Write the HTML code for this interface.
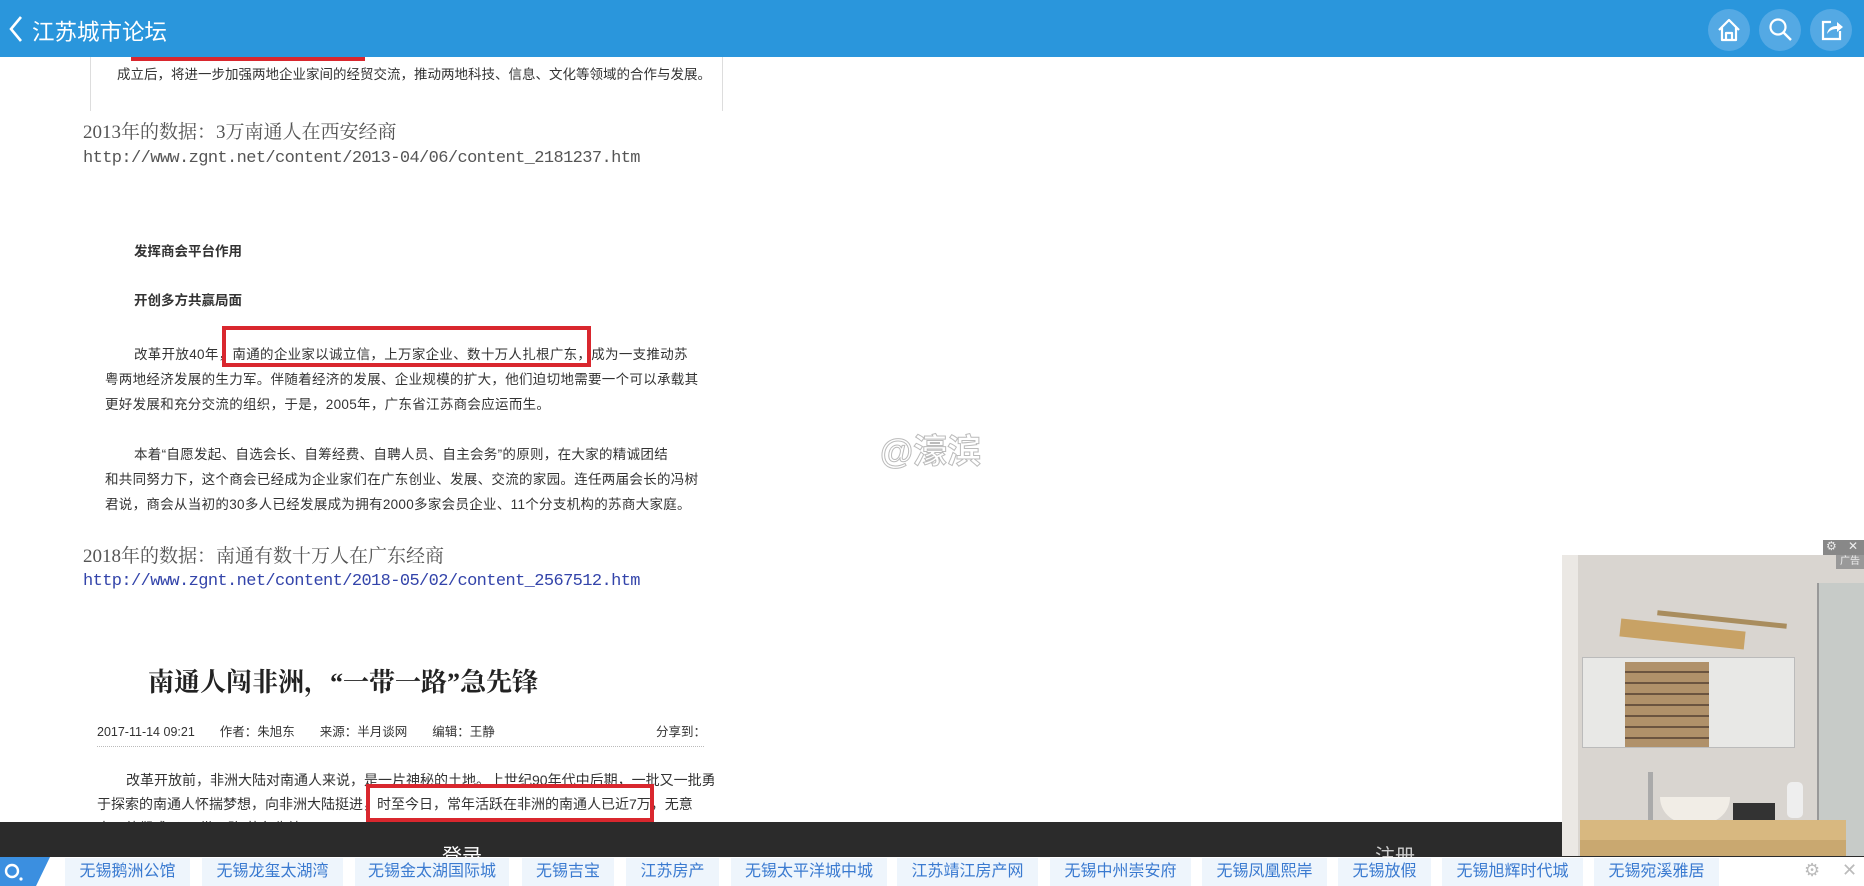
<!DOCTYPE html>
<html><head><meta charset="utf-8"><style>
*{margin:0;padding:0;box-sizing:border-box}
body{width:1864px;height:886px;overflow:hidden;background:#fff;position:relative;font-family:"Liberation Sans","Noto Sans CJK SC",sans-serif}
.a{position:absolute;white-space:nowrap}
.hdr{left:0;top:0;width:1864px;height:57px;background:#2a96dc}
.ic{width:42px;height:42px;border-radius:50%;background:#54a9e4;top:9px}
.s{font-family:"Liberation Serif","Noto Serif CJK SC",serif;color:#555;font-size:19px}
.m{font-family:"Liberation Mono","Noto Sans CJK SC",monospace;font-size:17px;color:#555;letter-spacing:-0.6px}
.p{font-size:14px;color:#333}
.tag{top:858px;height:28px;background:#eef5fc;color:#3a7ad0;font-size:16px;line-height:28px;text-align:center}
</style></head><body>
<div class="a hdr"></div>
<svg class="a" style="left:8px;top:15px" width="16" height="28"><path d="M13 2 L3 14 L13 26" stroke="#fff" stroke-width="2.6" fill="none"/></svg>
<div class="a" style="left:32px;top:15px;color:#fff;font-size:22.5px">江苏城市论坛</div>
<div class="a ic" style="left:1708px"></div>
<div class="a ic" style="left:1759px"></div>
<div class="a ic" style="left:1810px"></div>
<svg class="a" style="left:1716px;top:17px" width="26" height="26"><path d="M3 13 L13 3 L23 13 M6 10 V23 H20 V10 M10 23 V16 H16 V23" stroke="#fff" stroke-width="2.2" fill="none" stroke-linejoin="round"/></svg>
<svg class="a" style="left:1768px;top:17px" width="26" height="26"><circle cx="10" cy="10" r="7.5" stroke="#fff" stroke-width="2.2" fill="none"/><path d="M15.5 15.5 L23 23" stroke="#fff" stroke-width="2.4"/></svg>
<svg class="a" style="left:1819px;top:17px" width="26" height="26"><path d="M12 5 H4 V22 H21 V14" stroke="#fff" stroke-width="2.2" fill="none"/><path d="M8 17 C9 11 13 9 18 9 V5 L24 10 L18 15 V12 C14 12 11 13 8 17 Z" fill="#fff"/></svg>

<div class="a" style="left:131px;top:57px;width:234px;height:4px;background:#d9272e"></div>
<div class="a" style="left:90px;top:57px;width:1px;height:54px;background:#ddd"></div>
<div class="a" style="left:722px;top:57px;width:1px;height:54px;background:#ddd"></div>
<div class="a p" style="left:117px;top:63px;font-size:13.5px">成立后，将进一步加强两地企业家间的经贸交流，推动两地科技、信息、文化等领域的合作与发展。</div>

<div class="a s" style="left:83px;top:117px">2013年的数据：3万南通人在西安经商</div>
<div class="a m" style="left:83px;top:149px">http://www.zgnt.net/content/2013-04/06/content_2181237.htm</div>

<div class="a p" style="left:134px;top:240px;font-weight:bold;font-size:13.5px">发挥商会平台作用</div>
<div class="a p" style="left:134px;top:289px;font-weight:bold;font-size:13.5px">开创多方共赢局面</div>
<div class="a p" style="left:134px;top:343px;font-size:13.5px;letter-spacing:0.3px">改革开放40年，南通的企业家以诚立信，上万家企业、数十万人扎根广东，成为一支推动苏</div>
<div class="a p" style="left:105px;top:368px;font-size:13.5px;letter-spacing:0.3px">粤两地经济发展的生力军。伴随着经济的发展、企业规模的扩大，他们迫切地需要一个可以承载其</div>
<div class="a p" style="left:105px;top:393px;font-size:13.5px;letter-spacing:0.3px">更好发展和充分交流的组织，于是，2005年，广东省江苏商会应运而生。</div>
<div class="a" style="left:222px;top:326px;width:369px;height:41px;border:4px solid #d9272e"></div>
<div class="a p" style="left:134px;top:443px;font-size:13.5px;letter-spacing:0.3px">本着“自愿发起、自选会长、自筹经费、自聘人员、自主会务”的原则，在大家的精诚团结</div>
<div class="a p" style="left:105px;top:468px;font-size:13.5px;letter-spacing:0.3px">和共同努力下，这个商会已经成为企业家们在广东创业、发展、交流的家园。连任两届会长的冯树</div>
<div class="a p" style="left:105px;top:493px;font-size:13.5px;letter-spacing:0.3px">君说，商会从当初的30多人已经发展成为拥有2000多家会员企业、11个分支机构的苏商大家庭。</div>

<div class="a" style="left:880px;top:424px;font-size:34px;color:#fff;-webkit-text-stroke:1px #bbb;font-weight:bold">@濠滨</div>

<div class="a s" style="left:83px;top:541px">2018年的数据：南通有数十万人在广东经商</div>
<div class="a m" style="left:83px;top:572px;color:#3344aa">http://www.zgnt.net/content/2018-05/02/content_2567512.htm</div>

<div class="a" style="left:148px;top:662px;font-size:26px;font-weight:bold;color:#222;font-family:'Liberation Serif','Noto Serif CJK SC',serif">南通人闯非洲，“一带一路”急先锋</div>
<div class="a" style="left:97px;top:721px;font-size:12.5px;color:#333">2017-11-14 09:21　　作者：朱旭东　　来源：半月谈网　　编辑：王静</div>
<div class="a" style="left:656px;top:721px;font-size:12.5px;color:#333">分享到：</div>
<div class="a" style="left:97px;top:746px;width:607px;border-top:1px dotted #bbb"></div>
<div class="a p" style="left:126px;top:770px;font-size:14px">改革开放前，非洲大陆对南通人来说，是一片神秘的土地。上世纪90年代中后期，一批又一批勇</div>
<div class="a p" style="left:97px;top:794px;font-size:14px">于探索的南通人怀揣梦想，向非洲大陆挺进，时至今日，常年活跃在非洲的南通人已近7万，无意</div>
<div class="a p" style="left:97px;top:818px;font-size:14px">中，他们成了“一带一路”的急先锋。</div>
<div class="a" style="left:366px;top:784px;width:288px;height:38px;border:4px solid #d9272e"></div>

<div class="a" style="left:0;top:822px;width:1864px;height:35px;background:#2b2b2b"></div>
<div class="a" style="left:442px;top:840px;color:#fff;font-size:20px">登录</div>
<div class="a" style="left:1375px;top:840px;color:#ccc;font-size:20px">注册</div>

<div class="a" style="left:0;top:857px;width:1864px;height:29px;background:#fff"></div>
<svg class="a" style="left:0;top:857px" width="50" height="29"><path d="M0 0 H50 L36 29 H0 Z" fill="#3b8fe0"/><circle cx="12" cy="14" r="6" stroke="#fff" stroke-width="2.4" fill="none"/><circle cx="21" cy="22" r="1.6" fill="#fff"/></svg>
<div class="a tag" style="left:65px;width:125px">无锡鹅洲公馆</div>
<div class="a tag" style="left:202px;width:141px">无锡龙玺太湖湾</div>
<div class="a tag" style="left:355px;width:154px">无锡金太湖国际城</div>
<div class="a tag" style="left:522px;width:92px">无锡吉宝</div>
<div class="a tag" style="left:626px;width:93px">江苏房产</div>
<div class="a tag" style="left:731px;width:156px">无锡太平洋城中城</div>
<div class="a tag" style="left:897px;width:141px">江苏靖江房产网</div>
<div class="a tag" style="left:1050px;width:141px">无锡中州崇安府</div>
<div class="a tag" style="left:1202px;width:125px">无锡凤凰熙岸</div>
<div class="a tag" style="left:1338px;width:93px">无锡放假</div>
<div class="a tag" style="left:1442px;width:141px">无锡旭辉时代城</div>
<div class="a tag" style="left:1594px;width:125px">无锡宛溪雅居</div>
<div class="a" style="left:1804px;top:860px;color:#bbb;font-size:18px">⚙</div>
<div class="a" style="left:1842px;top:860px;color:#bbb;font-size:18px">✕</div>

<!-- ad -->
<div class="a" style="left:1823px;top:540px;width:41px;height:15px;background:#888"></div>
<div class="a" style="left:1826px;top:539px;color:#eee;font-size:12px">⚙</div>
<div class="a" style="left:1848px;top:539px;color:#eee;font-size:12px">✕</div>
<div class="a" style="left:1562px;top:555px;width:302px;height:301px;background:#d9d5d0;overflow:hidden">
  <div class="a" style="left:0;top:0;width:16px;height:301px;background:#ebe8e4"></div>
  <div class="a" style="left:255px;top:28px;width:47px;height:273px;background:#c7cbc8;border-left:2px solid #999"></div>
  <div class="a" style="left:58px;top:70px;width:125px;height:18px;background:#c8a265;transform:rotate(6deg)"></div>
  <div class="a" style="left:95px;top:62px;width:130px;height:5px;background:#a98d5e;transform:rotate(6deg)"></div>
  <div class="a" style="left:20px;top:102px;width:213px;height:91px;background:#e8e8e6;border:1px solid #bbb"></div>
  <div class="a" style="left:63px;top:107px;width:84px;height:85px;background:repeating-linear-gradient(to bottom,#b0916a 0,#b0916a 9px,#6b5440 9px,#6b5440 11px)"></div>
  <div class="a" style="left:98px;top:242px;width:70px;height:26px;background:#f1ede6;border-radius:0 0 35px 35px"></div>
  <div class="a" style="left:86px;top:217px;width:5px;height:50px;background:#aaa"></div>
  <div class="a" style="left:171px;top:248px;width:42px;height:18px;background:#333"></div>
  <div class="a" style="left:225px;top:227px;width:16px;height:36px;background:#eee;border-radius:5px"></div>
  <div class="a" style="left:18px;top:265px;width:266px;height:20px;background:#d8b880"></div>
  <div class="a" style="left:18px;top:285px;width:266px;height:16px;background:#c9a870"></div>
</div>
<div class="a" style="left:1836px;top:555px;width:28px;height:14px;background:#999;color:#eee;font-size:10px;line-height:14px;text-align:center">广告</div>
</body></html>
